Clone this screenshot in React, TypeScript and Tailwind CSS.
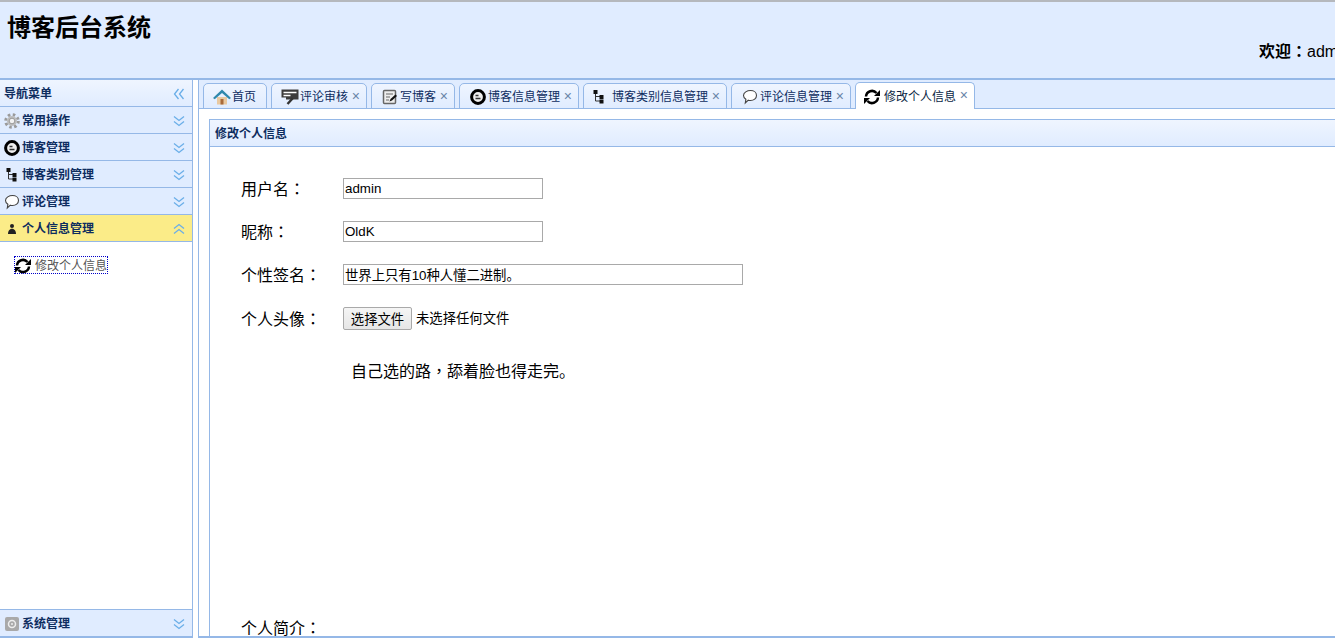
const Chevrons = ({ dir = "down" }: { dir?: "down" | "up" | "left" }) => {
  const rotate = dir === "up" ? "rotate-180" : dir === "left" ? "rotate-90" : "";
  return (
    <svg viewBox="0 0 12 12" className={`w-3 h-3 ${rotate}`} fill="none" stroke="#6aaee8" strokeWidth="1.3">
      <path d="M1 1.500L6 5.500L11 1.500" />
      <path d="M1 6.500L6 10.500L11 6.500" />
    </svg>
  );
};

const Gear = () => (
  <svg viewBox="0 0 16 16" className="w-4 h-4">
    <circle cx="8" cy="8" r="6.300" fill="none" stroke="#9a9a9a" strokeWidth="3" strokeDasharray="2.500 2.450" />
    <circle cx="8" cy="8" r="5" fill="#bdbdbd" />
    <circle cx="8" cy="8" r="2.800" fill="#f2f2f2" stroke="#8a8a8a" strokeWidth=".8" />
  </svg>
);

const BlogIcon = () => (
  <svg viewBox="0 0 16 16" className="w-4 h-4">
    <circle cx="8" cy="8" r="6.400" fill="#eee" stroke="#000" strokeWidth="3" />
    <path d="M5.500 6.500h3M5.500 9.500h5" stroke="#333" strokeWidth="1.300" />
  </svg>
);

const TreeIcon = () => (
  <svg viewBox="0 0 16 16" className="w-4 h-4">
    <path d="M4.500 3v9h5M4.500 7.500h5" stroke="#333" strokeWidth="1" fill="none" />
    <rect x="2.500" y="1" width="4" height="4" fill="#111" />
    <rect x="8.500" y="6" width="4" height="4" fill="#111" />
    <rect x="8.500" y="10.500" width="4" height="4" fill="#111" />
  </svg>
);

const CommentIcon = () => (
  <svg viewBox="0 0 16 16" className="w-4 h-4" fill="#fff" stroke="#444" strokeWidth="1.100">
    <path d="M8.500 1.500c3.300 0 6 2 6 5s-2.700 5-6 5c-.8 0-1.500-.1-2.200-.3L3.300 14l.6-3.800C2.400 9.300 1.500 8 1.500 6.500c0-3 3.700-5 7-5z" />
  </svg>
);

const UserIcon = () => (
  <svg viewBox="0 0 16 16" className="w-4 h-4" fill="#222">
    <circle cx="8" cy="5" r="2" />
    <path d="M4 13c0-3 1.500-5.300 4-5.300s4 2.300 4 5.300z" />
  </svg>
);

const RefreshIcon = () => (
  <svg viewBox="0 0 16 16" className="w-4 h-4" fill="none" stroke="#000" strokeWidth="2.500">
    <path d="M2 7.500A6 6 0 0 1 12.500 4" />
    <path d="M14 8.500A6 6 0 0 1 3.500 12" />
    <path d="M10 7h6V1z" fill="#000" stroke="none" />
    <path d="M6 9H0v6z" fill="#000" stroke="none" />
  </svg>
);

const SystemIcon = () => (
  <svg viewBox="0 0 16 16" className="w-4 h-4">
    <rect x="1" y="1" width="14" height="14" rx="2" fill="#a9a9a9" />
    <circle cx="8" cy="8" r="3.500" fill="none" stroke="#eee" strokeWidth="1.500" />
    <circle cx="8" cy="8" r="1" fill="#eee" />
  </svg>
);

const HomeIcon = () => (
  <svg viewBox="0 0 18 16" className="w-[18px] h-4">
    <path d="M4 8v7.500h10V8z" fill="#e9c9a0" />
    <rect x="7.500" y="10" width="3" height="5.500" fill="#a86a3a" />
    <path d="M0 9L9 .5 18 9l-1.700 1.300L9 4 1.700 10.300z" fill="#2f88ac" />
  </svg>
);

const ReviewIcon = () => (
  <svg viewBox="0 0 18 16" className="w-[18px] h-4">
    <path d="M.5 .5h17v10H5v-2H.5z" fill="#3c3c3c" />
    <path d="M2.500 3.500h13M2.500 6.500h7" stroke="#fff" strokeWidth="1.300" />
    <path d="M6.500 15l5.500-6" stroke="#333" strokeWidth="2.400" />
  </svg>
);

const WriteIcon = () => (
  <svg viewBox="0 0 16 16" className="w-4 h-4">
    <rect x="1.500" y="1.500" width="12" height="13" rx="1" fill="#eee" stroke="#666" strokeWidth="1.500" />
    <path d="M4 5h7M4 8h4M4 11h3" stroke="#666" strokeWidth="1" />
    <path d="M7.500 12.500l1-2.500 5-4.500 1.500 1.500-5 4.500z" fill="#111" />
  </svg>
);

// centred full-width punctuation, as the original page's font draws it
const Punct = ({ children }: { children: string }) => (
  <span className="font-['Noto_Sans_CJK_TC',sans-serif]">{children}</span>
);

const menus = [
  { name: "常用操作", icon: <Gear /> },
  { name: "博客管理", icon: <BlogIcon /> },
  { name: "博客类别管理", icon: <TreeIcon /> },
  { name: "评论管理", icon: <CommentIcon /> },
];

const tabs = [
  { name: "首页", icon: <HomeIcon />, width: "w-[64px]", close: false, gap: "gap-[1px] pl-[9px]" },
  { name: "评论审核", icon: <ReviewIcon />, width: "w-[96px]", close: true, gap: "gap-[1px] pl-[9px]" },
  { name: "写博客", icon: <WriteIcon />, width: "w-[84px]", close: true, gap: "gap-[2px] pl-[10px]" },
  { name: "博客信息管理", icon: <BlogIcon />, width: "w-[120px]", close: true, gap: "gap-[2px] pl-[10px]" },
  { name: "博客类别信息管理", icon: <TreeIcon />, width: "w-[144px]", close: true, gap: "gap-[5px] pl-[7px]" },
  { name: "评论信息管理", icon: <CommentIcon />, width: "w-[120px]", close: true, gap: "gap-[2px] pl-[10px]" },
];

const App = () => {
  return (
    <div className="w-[1335px] h-[640px] overflow-hidden bg-white text-black font-['Liberation_Sans','Noto_Sans_CJK_SC',sans-serif]">
      <div className="h-[80px] bg-[#E0ECFF] border-t-2 border-t-[#b5b8bd] border-b-2 border-b-[#95B8E7] flex justify-between">
        <h1 className="ml-[7px] mt-[9px] text-2xl leading-[34px] font-bold">博客后台系统</h1>
        <div className="mt-[37px] w-[76px] shrink-0 overflow-hidden whitespace-nowrap text-base leading-[22px]">
          <b>欢迎<Punct>：</Punct></b>admin
        </div>
      </div>

      <div className="flex h-[560px]">
        <aside className="w-[193px] h-[558px] shrink-0 border-r border-[#95B8E7] flex flex-col text-xs font-bold text-[#0E2D5F]">
          <div className="h-[27px] shrink-0 flex items-center justify-between pt-px pl-1 pr-[7px] border-b border-[#95B8E7] bg-gradient-to-b from-[#EFF5FF] to-[#E0ECFF]">
            <span>导航菜单</span>
            <Chevrons dir="left" />
          </div>
          {menus.map((m) => (
            <div key={m.name} className="h-[27px] shrink-0 flex items-center pt-px pl-1 pr-[7px] border-b border-[#95B8E7] bg-[#E0ECFF]">
              {m.icon}
              <span className="ml-[2px] flex-1">{m.name}</span>
              <Chevrons />
            </div>
          ))}
          <div className="h-[27px] shrink-0 flex items-center pt-px pl-1 pr-[7px] border-b border-[#95B8E7] bg-[#FBEC88]">
            <UserIcon />
            <span className="ml-[2px] flex-1">个人信息管理</span>
            <Chevrons dir="up" />
          </div>
          <div className="flex-1 pt-[14px] pl-[14px] font-normal">
            <div className="w-[94px] h-[18px] flex items-center gap-[4px] pt-px outline-dotted outline-1 -outline-offset-1 outline-[#0000c8] text-[#555] pl-[1px]">
              <RefreshIcon />
              <span>修改个人信息</span>
            </div>
          </div>
          <div className="h-[29px] shrink-0 flex items-center pt-px pl-1 pr-[7px] border-t border-[#95B8E7] border-b-2 bg-[#E0ECFF]">
            <SystemIcon />
            <span className="ml-[2px] flex-1">系统管理</span>
            <Chevrons />
          </div>
        </aside>

        <main className="ml-[5px] w-[1200px] shrink-0 h-[558px] border-l border-[#95B8E7] border-b-2 border-b-[#95B8E7] flex flex-col">
          <div className="h-[29px] shrink-0 bg-[#E0ECFF] border-b border-[#95B8E7] flex items-end gap-1 pl-1 text-xs text-[#0E2D5F]">
            {tabs.map((t) => (
              <div
                key={t.name}
                className={`${t.width} ${t.gap} h-[26px] -mb-px pt-px flex items-center relative rounded-t-[5px] border border-[#95B8E7] bg-gradient-to-b from-[#EFF5FF] to-[#E0ECFF]`}
              >
                {t.icon}
                <span>{t.name}</span>
                {t.close && <span className="absolute right-[6px] top-[5px] text-sm leading-[14px] text-[#6a84a8]">×</span>}
              </div>
            ))}
            <div className="w-[120px] h-[27px] -mb-px pt-px flex items-center relative gap-[4px] pl-[8px] rounded-t-[5px] border border-[#95B8E7] border-b-0 bg-white text-[#0a1f44]">
              <RefreshIcon />
              <span>修改个人信息</span>
              <span className="absolute right-[6px] top-[5px] text-sm leading-[14px] text-[#6a84a8]">×</span>
            </div>
          </div>

          <div className="flex-1 pt-[10px] pl-[10px] overflow-hidden">
            <div className="h-full border-l border-[#95B8E7]">
              <div className="h-[28px] flex items-center pt-[2px] pl-[5px] border-y border-[#95B8E7] bg-gradient-to-b from-[#EFF5FF] to-[#E0ECFF] text-xs font-bold text-[#0E2D5F]">
                修改个人信息
              </div>
              <div className="pl-[31px] text-base">
                <div className="flex items-center h-[21px] mt-[31px]">
                  <span className="w-[102px] shrink-0">用户名<Punct>：</Punct></span>
                  <input readOnly defaultValue="admin" className="w-[200px] h-[21px] border border-[#a9a9a9] px-[1px] text-[13.33px] outline-none" />
                </div>
                <div className="flex items-center h-[21px] mt-[22px]">
                  <span className="w-[102px] shrink-0">昵称<Punct>：</Punct></span>
                  <input readOnly defaultValue="OldK" className="w-[200px] h-[21px] border border-[#a9a9a9] px-[1px] text-[13.33px] outline-none" />
                </div>
                <div className="flex items-center h-[21px] mt-[22px]">
                  <span className="w-[102px] shrink-0">个性签名<Punct>：</Punct></span>
                  <input readOnly defaultValue="世界上只有10种人懂二进制。" className="w-[400px] h-[21px] border border-[#a9a9a9] px-[1px] text-[13.33px] outline-none" />
                </div>
                <div className="flex items-center h-[23px] mt-[22px]">
                  <span className="w-[102px] shrink-0">个人头像<Punct>：</Punct></span>
                  <button className="w-[69px] h-[23px] pt-[2px] rounded-[2px] border border-[#a9a9a9] bg-gradient-to-b from-[#f5f5f5] to-[#e6e6e6] text-[13.33px]">选择文件</button>
                  <span className="ml-1 pt-px text-[13.33px]">未选择任何文件</span>
                </div>
                <p className="ml-[110px] mt-[28px] leading-[24px]">自己选的路<Punct>，</Punct>舔着脸也得走完。</p>
                <p className="mt-[231px] leading-[24px]">个人简介<Punct>：</Punct></p>
              </div>
            </div>
          </div>
        </main>
      </div>
    </div>
  );
};

export default App;
